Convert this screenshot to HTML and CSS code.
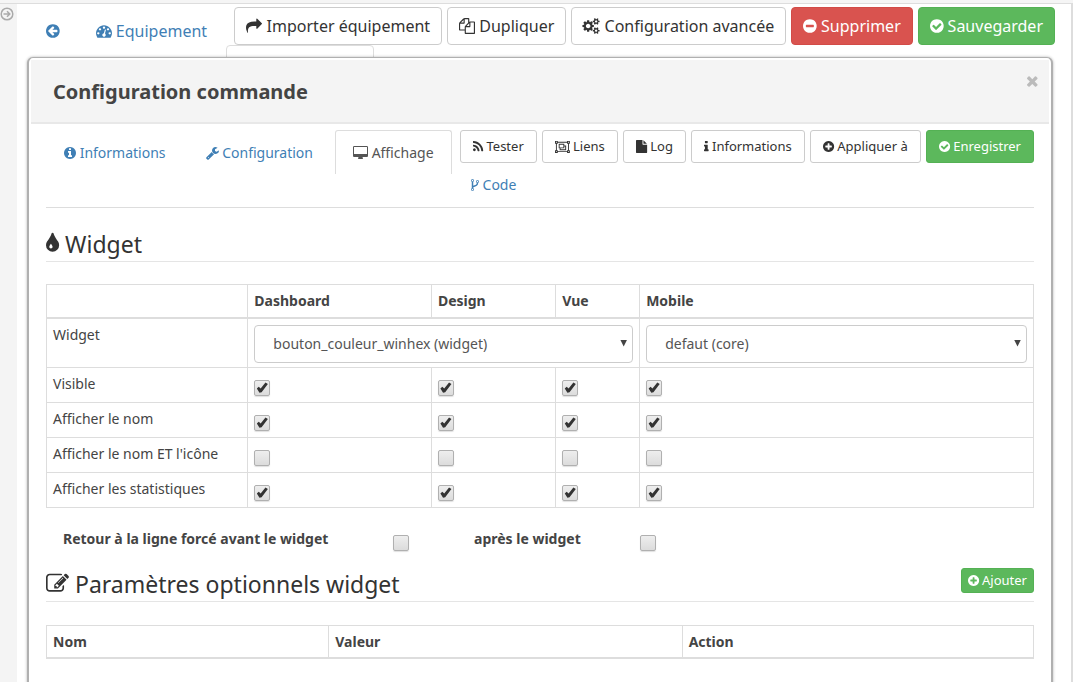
FILE: index.html
```html
<!DOCTYPE html>
<html lang="fr">
<head>
<meta charset="utf-8">
<title>Configuration commande</title>
<link rel="stylesheet" href="styles.css">
</head>
<body>
<svg class="sprite" aria-hidden="true">
  <defs>
    <path id="i-left" d="M1408 960v-128q0-26-19-45t-45-19h-502l189-189q19-19 19-45t-19-45l-91-91q-18-18-45-18t-45 18l-362 362-91 91q-18 18-18 45t18 45l91 91 362 362q18 18 45 18t45-18l91-91q18-18 18-45t-18-45l-189-189h502q26 0 45-19t19-45zm256-64q0 209-103 385.500t-279.500 279.500-385.500 103-385.500-103-279.500-279.500-103-385.500 103-385.500 279.500-279.500 385.500-103 385.500 103 279.500 279.500 103 385.500z"/>
    <path id="i-gauge" d="M384 1152q0-53-37.500-90.500t-90.500-37.500-90.500 37.500-37.500 90.500 37.500 90.500 90.500 37.500 90.500-37.500 37.500-90.500zm192-448q0-53-37.500-90.500t-90.500-37.500-90.500 37.500-37.500 90.500 37.500 90.500 90.500 37.500 90.500-37.500 37.500-90.500zm428 481l101-382q6-26-7.500-48.500t-38.500-29.500-48 6.500-30 39.500l-101 382q-60 5-107 43.500t-63 98.500q-20 77 20 146t117 89 146-20 89-117q16-60-6-117t-72-91zm660-33q0-53-37.500-90.500t-90.500-37.500-90.500 37.500-37.500 90.500 37.500 90.500 90.500 37.500 90.500-37.500 37.500-90.500zm-640-640q0-53-37.500-90.500t-90.500-37.500-90.500 37.500-37.500 90.500 37.500 90.500 90.500 37.500 90.500-37.500 37.500-90.500zm448 192q0-53-37.500-90.500t-90.500-37.500-90.500 37.500-37.500 90.500 37.500 90.500 90.500 37.500 90.500-37.500 37.500-90.500zm320 448q0 261-141 483-19 29-54 29h-1402q-35 0-54-29-141-221-141-483 0-182 71-348t191-286 286-191 348-71 348 71 286 191 191 286 71 348z"/>
    <path id="i-share" d="M1792 640q0 26-19 45l-512 512q-19 19-45 19t-45-19-19-45v-256h-224q-98 0-175.500 6t-154 21.500-133 42.500-105.500 69.500-80 101-48.500 138.500-17.500 181q0 55 5 123 0 6 2.500 23.500t2.500 26.500q0 15-8.500 25t-23.500 10q-16 0-28-17-7-9-13-22t-13.500-30-10.500-24q-127-285-127-451 0-199 53-333 162-403 875-403h224v-256q0-26 19-45t45-19 45 19l512 512q19 19 19 45z"/>
    <path id="i-files" d="M1696 384q40 0 68 28t28 68v1216q0 40-28 68t-68 28h-960q-40 0-68-28t-28-68v-288h-544q-40 0-68-28t-28-68v-672q0-40 20-88t48-76l408-408q28-28 76-48t88-20h416q40 0 68 28t28 68v328q68-40 128-40h416zm-544 213l-299 299h299v-299zm-640-384l-299 299h299v-299zm196 647l316-316v-416h-384v416q0 40-28 68t-68 28h-416v640h512v-256q0-40 20-88t48-76zm956 804v-1152h-384v416q0 40-28 68t-68 28h-416v640h896z"/>
    <path id="i-cogs" fill-rule="evenodd" d="M832 896q0-106-75-181t-181-75-181 75-75 181 75 181 181 75 181-75 75-181zm768 512q0-52-38-90t-90-38-90 38-38 90q0 53 37.500 90.500t90.500 37.500 90.500-37.500 37.500-90.500zm0-1024q0-52-38-90t-90-38-90 38-38 90q0 53 37.500 90.500t90.500 37.500 90.500-37.500 37.500-90.500zm-384 421v185q0 10-7 19.500t-16 10.500l-155 24q-11 35-32 76 34 48 90 115 7 11 7 20 0 12-7 19-23 30-82.500 89.500t-78.500 59.500q-11 0-21-7l-115-90q-37 19-77 31-11 108-23 155-7 24-30 24h-186q-11 0-20-7.500t-10-17.500l-23-153q-34-10-75-31l-118 89q-7 7-20 7-11 0-21-8-144-133-144-160 0-9 7-19 10-14 41-53t47-61q-23-44-35-82l-152-24q-10-1-17-9.500t-7-19.500v-185q0-10 7-19.500t16-10.500l155-24q11-35 32-76-34-48-90-115-7-11-7-20 0-12 7-20 22-30 82-89t79-59q11 0 21 7l115 90q34-18 77-32 11-108 23-154 7-24 30-24h186q11 0 20 7.500t10 17.500l23 153q34 10 75 31l118-89q8-7 20-7 11 0 21 8 144 133 144 160 0 8-7 19-12 16-42 54t-45 60q23 48 34 82l152 23q10 2 17 10.500t7 19.500zm640 533v140q0 16-149 31-12 27-30 52 51 113 51 138 0 4-4 7-122 71-124 71-8 0-46-47t-52-68q-20 2-30 2t-30-2q-14 21-52 68t-46 47q-2 0-124-71-4-3-4-7 0-25 51-138-18-25-30-52-149-15-149-31v-140q0-16 149-31 13-29 30-52-51-113-51-138 0-4 4-7 4-2 35-20t59-34 30-16q8 0 46 46.500t52 67.500q20-2 30-2t30 2q51-71 92-112l6-2q4 0 124 70 4 3 4 7 0 25-51 138 17 23 30 52 149 15 149 31zm0-1024v140q0 16-149 31-12 27-30 52 51 113 51 138 0 4-4 7-122 71-124 71-8 0-46-47t-52-68q-20 2-30 2t-30-2q-14 21-52 68t-46 47q-2 0-124-71-4-3-4-7 0-25 51-138-18-25-30-52-149-15-149-31v-140q0-16 149-31 13-29 30-52-51-113-51-138 0-4 4-7 4-2 35-20t59-34 30-16q8 0 46 46.500t52 67.500q20-2 30-2t30 2q51-71 92-112l6-2q4 0 124 70 4 3 4 7 0 25-51 138 17 23 30 52 149 15 149 31z"/>
    <path id="i-minus" d="M1344 960v-128q0-26-19-45t-45-19h-768q-26 0-45 19t-19 45v128q0 26 19 45t45 19h768q26 0 45-19t19-45zm320-64q0 209-103 385.500t-279.500 279.500-385.500 103-385.500-103-279.500-279.500-103-385.500 103-385.500 279.500-279.500 385.500-103 385.500 103 279.500 279.500 103 385.500z"/>
    <path id="i-check" d="M1412 734q0-28-18-46l-91-90q-19-19-45-19t-45 19l-408 407-226-226q-19-19-45-19t-45 19l-91 90q-18 18-18 46 0 27 18 45l362 362q19 19 45 19 27 0 46-19l543-543q18-18 18-45zm252 162q0 209-103 385.500t-279.500 279.500-385.500 103-385.500-103-279.500-279.500-103-385.500 103-385.500 279.500-279.500 385.500-103 385.500 103 279.500 279.500 103 385.500z"/>
    <path id="i-plus" d="M1344 960v-128q0-26-19-45t-45-19h-256v-256q0-26-19-45t-45-19h-128q-26 0-45 19t-19 45v256h-256q-26 0-45 19t-19 45v128q0 26 19 45t45 19h256v256q0 26 19 45t45 19h128q26 0 45-19t19-45v-256h256q26 0 45-19t19-45zm320-64q0 209-103 385.500t-279.500 279.500-385.500 103-385.500-103-279.500-279.500-103-385.500 103-385.500 279.500-279.500 385.500-103 385.500 103 279.500 279.500 103 385.500z"/>
    <path id="i-infoc" d="M1152 1376v-160q0-14-9-23t-23-9h-96v-512q0-14-9-23t-23-9h-320q-14 0-23 9t-9 23v160q0 14 9 23t23 9h96v320h-96q-14 0-23 9t-9 23v160q0 14 9 23t23 9h448q14 0 23-9t9-23zm-128-896v-160q0-14-9-23t-23-9h-192q-14 0-23 9t-9 23v160q0 14 9 23t23 9h192q14 0 23-9t9-23zm640 416q0 209-103 385.500t-279.500 279.500-385.500 103-385.500-103-279.500-279.500-103-385.500 103-385.500 279.500-279.500 385.500-103 385.500 103 279.500 279.500 103 385.500z"/>
    <path id="i-wrench" d="M448 1472q0-26-19-45t-45-19-45 19-19 45 19 45 45 19 45-19 19-45zm644-420l-682 682q-37 37-90 37-52 0-91-37l-106-108q-38-36-38-90 0-53 38-91l681-681q39 98 114.500 173.500t173.500 114.500zm634-435q0 39-23 106-47 134-164.500 217.500t-258.500 83.500q-185 0-316.500-131.500t-131.500-316.500 131.500-316.500 316.500-131.500q58 0 121.500 16.500t107.500 46.500q16 11 16 28t-16 28l-293 169v224l193 107q5-3 79-48.500t135.500-81 70.500-35.500q15 0 23.500 10t8.500 25z"/>
    <path id="i-desktop" d="M1792 992v-832q0-13-9.500-22.500t-22.500-9.500h-1600q-13 0-22.500 9.500t-9.500 22.500v832q0 13 9.500 22.500t22.500 9.500h1600q13 0 22.500-9.500t9.500-22.500zm128-832v1088q0 66-47 113t-113 47h-544q0 37 16 77.500t32 71 16 43.500q0 26-19 45t-45 19h-512q-26 0-45-19t-19-45q0-14 16-44t32-70 16-78h-544q-66 0-113-47t-47-113v-1088q0-66 47-113t113-47h1600q66 0 113 47t47 113z"/>
    <path id="i-rss" d="M576 1344q0 80-56 136t-136 56-136-56-56-136 56-136 136-56 136 56 56 136zm512 123q2 28-17 48-18 21-47 21h-135q-25 0-43-16.500t-20-41.500q-22-229-184.500-391.500t-391.500-184.500q-25-2-41.500-20t-16.500-43v-135q0-29 21-47 17-17 43-17h5q160 13 306 80.500t259 181.500q114 113 181.500 259t80.500 306zm512 2q2 27-18 47-18 20-46 20h-143q-26 0-44.500-17.500t-19.500-42.500q-12-215-101-408.500t-231.500-336-336-231.500-408.500-102q-25-1-42.500-19.500t-17.500-43.500v-143q0-28 20-46 18-18 44-18h3q262 13 501.500 120t425.500 294q187 186 294 425.500t120 501.500z"/>
    <path id="i-group" fill-rule="evenodd" d="M0 128h384v128h1280v-128h384v384h-128v896h128v384h-384v-128h-1280v128h-384v-384h128v-896h-128zM128 256v128h128v-128zM1792 256v128h128v-128zM128 1536v128h128v-128zM1792 1536v128h128v-128zM384 384v128h-128v896h128v128h1280v-128h128v-896h-128v-128zM512 512h768v256h256v640h-896v-256h-128zM640 640v384h512v-384zM1280 896v256h-512v128h640v-384z"/>
    <path id="i-file" d="M1152 512v-472q22 14 36 28l408 408q14 14 28 36h-472zm-128 32q0 40 28 68t68 28h544v1056q0 40-28 68t-68 28h-1344q-40 0-68-28t-28-68v-1600q0-40 28-68t68-28h800v544z"/>
    <path id="i-info" d="M1216 1344v128q0 26-19 45t-45 19h-512q-26 0-45-19t-19-45v-128q0-26 19-45t45-19h64v-384h-64q-26 0-45-19t-19-45v-128q0-26 19-45t45-19h384q26 0 45 19t19 45v576h64q26 0 45 19t19 45zm-128-1152v192q0 26-19 45t-45 19h-256q-26 0-45-19t-19-45v-192q0-26 19-45t45-19h256q26 0 45 19t19 45z"/>
    <path id="i-fork" d="M672 1472q0-40-28-68t-68-28-68 28-28 68 28 68 68 28 68-28 28-68zm0-1152q0-40-28-68t-68-28-68 28-28 68 28 68 68 28 68-28 28-68zm640 128q0-40-28-68t-68-28-68 28-28 68 28 68 68 28 68-28 28-68zm96 0q0 52-26 96.500t-70 69.500q-2 287-226 414-67 38-203 81-128 40-169.500 71t-41.500 100v26q44 25 70 69.500t26 96.500q0 80-56 136t-136 56-136-56-56-136q0-52 26-96.500t70-69.500v-820q-44-25-70-69.500t-26-96.500q0-80 56-136t136-56 136 56 56 136q0 52-26 96.500t-70 69.500v497q54-26 154-57 55-17 87.500-29.500t70.500-31 59-39.500 40.500-51 28-69.500 8.500-91.500q-44-25-70-69.500t-26-96.500q0-80 56-136t136-56 136 56 56 136z"/>
    <path id="i-tint" d="M896 1152q0-36-20-69-1-1-15.500-22.500t-25.500-38-25-44-21-50.500q-4-16-21-16t-21 16q-7 23-21 50.500t-25 44-25.500 38-15.500 22.500q-20 33-20 69 0 53 37.500 90.500t90.500 37.500 90.500-37.500 37.500-90.500zm512-128q0 212-150 362t-362 150-362-150-150-362q0-145 81-275 6-9 62.500-90.500t101-151 99.500-178 83-201.500q9-30 34-47t51-17 51.500 17 33.500 47q28 93 83 201.500t99.500 178 101 151 62.500 90.500q81 127 81 275z"/>
    <path id="i-edit" d="M888 1184l116-116-152-152-116 116v56h96v96h56zm440-720q-16-16-33 1l-350 350q-17 17-1 33t33-1l350-350q17-17 1-33zm80 594v190q0 119-84.500 203.500t-203.500 84.500h-832q-119 0-203.500-84.500t-84.500-203.500v-832q0-119 84.500-203.500t203.500-84.500h832q63 0 117 25 15 7 18 23 3 17-9 29l-49 49q-14 14-32 8-23-6-45-6h-832q-66 0-113 47t-47 113v832q0 66 47 113t113 47h832q66 0 113-47t47-113v-126q0-13 9-22l64-64q15-15 35-7t20 29zm-96-738l288 288-672 672h-288v-288zm444 132l-92 92-288-288 92-92q28-28 68-28t68 28l152 152q28 28 28 68t-28 68z"/>
    <path id="i-times" d="M1490 1322q0 40-28 68l-136 136q-28 28-68 28t-68-28l-294-294-294 294q-28 28-68 28t-68-28l-136-136q-28-28-28-68t28-68l294-294-294-294q-28-28-28-68t28-68l136-136q28-28 68-28t68 28l294 294 294-294q28-28 68-28t68 28l136 136q28 28 28 68t-28 68l-294 294 294 294q28 28 28 68z"/>
  </defs>
</svg>

<div class="page">
  <aside class="rail">
    <button class="rail-toggle" aria-label="Ouvrir le menu">
      <svg class="rail-icon" viewBox="0 0 14 14"><circle cx="7" cy="7" r="5.800"/><path d="M3.500 7h6M7 4.200L9.800 7 7 9.800"/></svg>
    </button>
  </aside>
  <main class="main">
    <nav class="crumbs">
      <a href="#" class="link" aria-label="Retour"><svg class="icon" viewBox="128 0 1536 1792"><use href="#i-left"/></svg></a>
      <a href="#" class="link"><svg class="icon" viewBox="0 0 1792 1792"><use href="#i-gauge"/></svg> Equipement</a>
    </nav>
    <div class="toolbar">
      <button class="btn btn-lg"><svg class="icon" viewBox="0 0 1792 1792"><use href="#i-share"/></svg> Importer équipement</button>
      <button class="btn btn-lg"><svg class="icon" viewBox="0 0 1792 1792"><use href="#i-files"/></svg> Dupliquer</button>
      <button class="btn btn-lg"><svg class="icon" viewBox="0 0 1920 1792"><use href="#i-cogs"/></svg> Configuration avancée</button>
      <button class="btn btn-lg btn-danger"><svg class="icon" viewBox="128 0 1536 1792"><use href="#i-minus"/></svg> Supprimer</button>
      <button class="btn btn-lg btn-success"><svg class="icon" viewBox="128 0 1536 1792"><use href="#i-check"/></svg> Sauvegarder</button>
    </div>
    <div class="back-tab"></div>
  </main>
</div>

<section class="modal" role="dialog" aria-labelledby="modal-title">
  <header class="modal-head">
    <h1 id="modal-title" class="modal-title">Configuration commande</h1>
    <button class="close" aria-label="Fermer"><svg class="icon" viewBox="302 0 1188 1792"><use href="#i-times"/></svg></button>
  </header>
  <div class="modal-body">
    <div class="tabbar">
      <nav class="tabs">
        <a href="#" class="tab"><svg class="icon" viewBox="128 0 1536 1792"><use href="#i-infoc"/></svg> Informations</a>
        <a href="#" class="tab"><svg class="icon" viewBox="64 0 1664 1792"><use href="#i-wrench"/></svg> Configuration</a>
        <a href="#" class="tab tab-active"><svg class="icon" viewBox="0 0 1920 1792"><use href="#i-desktop"/></svg> Affichage</a>
      </nav>
      <div class="actions">
        <div class="action-row">
          <button class="btn"><svg class="icon" viewBox="192 0 1408 1792"><use href="#i-rss"/></svg> Tester</button>
          <button class="btn"><svg class="icon" viewBox="0 0 2048 1792"><use href="#i-group"/></svg> Liens</button>
          <button class="btn"><svg class="icon" viewBox="128 0 1536 1792"><use href="#i-file"/></svg> Log</button>
          <button class="btn"><svg class="icon" viewBox="576 0 640 1792"><use href="#i-info"/></svg> Informations</button>
          <button class="btn"><svg class="icon" viewBox="128 0 1536 1792"><use href="#i-plus"/></svg> Appliquer à</button>
          <button class="btn btn-success"><svg class="icon" viewBox="128 0 1536 1792"><use href="#i-check"/></svg> Enregistrer</button>
        </div>
        <a href="#" class="code-link"><svg class="icon" viewBox="384 0 1024 1792"><use href="#i-fork"/></svg> Code</a>
      </div>
    </div>

    <div class="section-head">
      <h2 class="section-title"><svg class="icon" viewBox="384 0 1024 1792"><use href="#i-tint"/></svg> Widget</h2>
    </div>
    <table class="table widgets">
      <colgroup><col class="c-name"><col class="c-dash"><col class="c-design"><col class="c-vue"><col></colgroup>
      <thead>
        <tr><th></th><th>Dashboard</th><th>Design</th><th>Vue</th><th>Mobile</th></tr>
      </thead>
      <tbody>
        <tr class="row-select">
          <td>Widget</td>
          <td colspan="3"><div class="picker"><select class="select" aria-label="Widget dashboard"><option>bouton_couleur_winhex (widget)</option></select></div></td>
          <td><div class="picker"><select class="select" aria-label="Widget mobile"><option>defaut (core)</option></select></div></td>
        </tr>
        <tr>
          <td>Visible</td>
          <td><input type="checkbox" class="check" aria-label="Visible, dashboard" checked></td>
          <td><input type="checkbox" class="check" aria-label="Visible, design" checked></td>
          <td><input type="checkbox" class="check" aria-label="Visible, vue" checked></td>
          <td><input type="checkbox" class="check" aria-label="Visible, mobile" checked></td>
        </tr>
        <tr>
          <td>Afficher le nom</td>
          <td><input type="checkbox" class="check" aria-label="Nom, dashboard" checked></td>
          <td><input type="checkbox" class="check" aria-label="Nom, design" checked></td>
          <td><input type="checkbox" class="check" aria-label="Nom, vue" checked></td>
          <td><input type="checkbox" class="check" aria-label="Nom, mobile" checked></td>
        </tr>
        <tr>
          <td>Afficher le nom ET l'icône</td>
          <td><input type="checkbox" class="check" aria-label="Nom et icône, dashboard"></td>
          <td><input type="checkbox" class="check" aria-label="Nom et icône, design"></td>
          <td><input type="checkbox" class="check" aria-label="Nom et icône, vue"></td>
          <td><input type="checkbox" class="check" aria-label="Nom et icône, mobile"></td>
        </tr>
        <tr>
          <td>Afficher les statistiques</td>
          <td><input type="checkbox" class="check" aria-label="Statistiques, dashboard" checked></td>
          <td><input type="checkbox" class="check" aria-label="Statistiques, design" checked></td>
          <td><input type="checkbox" class="check" aria-label="Statistiques, vue" checked></td>
          <td><input type="checkbox" class="check" aria-label="Statistiques, mobile" checked></td>
        </tr>
      </tbody>
    </table>

    <div class="breaks">
      <label for="br-before">Retour à la ligne forcé avant le widget</label>
      <input type="checkbox" class="check" id="br-before">
      <label for="br-after">après le widget</label>
      <input type="checkbox" class="check" id="br-after">
    </div>

    <div class="section-head section-head-params">
      <h2 class="section-title"><svg class="icon" viewBox="0 0 1792 1792"><use href="#i-edit"/></svg> Paramètres optionnels widget</h2>
      <button class="btn btn-sm btn-success"><svg class="icon" viewBox="128 0 1536 1792"><use href="#i-plus"/></svg> Ajouter</button>
    </div>
    <table class="table params">
      <colgroup><col class="c-nom"><col class="c-valeur"><col></colgroup>
      <thead><tr><th>Nom</th><th>Valeur</th><th>Action</th></tr></thead>
    </table>
  </div>
</section>
</body>
</html>
```

FILE: styles.css
```css
* { box-sizing: border-box; }

html, body { height: 100%; }

body {
  margin: 0;
  overflow: hidden;
  position: relative;
  background: #fff;
  color: #444;
  font: 14px/20px "Noto Sans", sans-serif;
}

a { color: #3f7fb5; text-decoration: none; }
button { font: inherit; cursor: pointer; }

.sprite { position: absolute; width: 0; height: 0; }

.icon {
  height: 1em;
  width: auto;
  fill: currentColor;
  vertical-align: -2px;
  overflow: visible;
}

/* Page behind the dialog */
.page {
  min-height: 100%;
  display: grid;
  grid-template-columns: 17px 1fr;
  border-top: 3px solid #f5f5f5;
}

.rail { background: #f4f4f4; border-top: 1px solid #ddd; }

.rail-toggle {
  display: block;
  margin: 3px 0 0;
  padding: 0;
  border: 0;
  background: none;
}

.rail-icon {
  display: block;
  width: 14px;
  height: 14px;
  fill: none;
  stroke: #aaa;
  stroke-width: 1.500;
}

.main {
  display: grid;
  grid-template-columns: 1fr auto;
  grid-template-rows: auto 1fr;
  border-top: 1px solid #ddd;
  border-right: 2px solid #ddd;
}

.crumbs {
  display: flex;
  gap: 36px;
  padding: 15px 0 0 29px;
  font-size: 16px;
  line-height: 24px;
  white-space: nowrap;
}

.toolbar { display: flex; gap: 5px; padding: 3px 16px 0 0; }

.back-tab {
  grid-column: 1 / -1;
  width: 148px;
  height: 20px;
  margin: 0 0 0 209px;
  border: 1px solid #ddd;
  border-radius: 4px 4px 0 0;
}

.btn {
  padding: 6px 12px;
  border: 1px solid #ccc;
  border-radius: 3px;
  background: #fff;
  color: #333;
  font-size: 13px;
  line-height: 19px;
  white-space: nowrap;
}

.btn-lg { padding: 6px 11px; border-radius: 4px; font-size: 16px; line-height: 24px; }
.btn-sm { padding: 2px 6px; }
.btn-success { background: #5cb85c; border-color: #54b154; color: #fff; }
.btn-danger { background: #d9534f; border-color: #d24b47; color: #fff; }

/* Dialog */
.modal {
  position: absolute;
  top: 57px;
  right: 20px;
  bottom: -10px;
  left: 27px;
  padding: 2px;
  border: 2px solid #b0b0b0;
  border-top-width: 1px;
  border-radius: 6px;
  background: #fff;
  box-shadow: 0 0 3px rgba(0, 0, 0, 0.300);
}

.modal-head {
  display: flex;
  justify-content: space-between;
  align-items: flex-start;
  height: 64px;
  padding: 17px 11px 0 22px;
  border-bottom: 2px solid #e8e8e8;
  background: #f4f4f4;
}

.modal-title { margin: 0; font-size: 20px; line-height: 30px; font-weight: 700; }

.close {
  display: flex;
  align-items: flex-start;
  padding: 0;
  border: 0;
  background: none;
  color: #bbb;
  font-size: 16px;
  line-height: 16px;
  margin-top: -4px;
}

.modal-body { padding: 6px 15px 0; }

.tabbar {
  display: flex;
  justify-content: space-between;
  height: 78px;
  border-bottom: 1px solid #ddd;
}

.tabs { display: flex; gap: 4px; }

.tab { height: 44px; padding: 12px 17px; border: 1px solid transparent; white-space: nowrap; }

.tab-active {
  border-color: #ddd;
  border-bottom: 0;
  border-radius: 3px 3px 0 0;
  color: #555;
}

.action-row { display: flex; gap: 5px; }
.code-link { display: block; padding: 12px 11px 0; }

.section-head {
  display: flex;
  justify-content: space-between;
  align-items: flex-start;
  height: 36px;
  margin: 18px 0 22px;
  border-bottom: 1px solid #e5e5e5;
}

.section-title { margin: 0; color: #333; font-size: 23px; line-height: 36px; font-weight: 400; }

.table {
  width: 100%;
  table-layout: fixed;
  border-collapse: collapse;
}

.table th, .table td {
  height: 35px;
  padding: 6px 6px 4px;
  border: 1px solid #ddd;
  text-align: left;
  vertical-align: top;
}

.table th { height: 33px; border-bottom-width: 2px; }
.row-select td { height: 49px; }

.c-name { width: 20.400%; }
.c-dash { width: 18.600%; }
.c-design { width: 12.600%; }
.c-vue { width: 8.500%; }
.c-nom { width: 28.600%; }
.c-valeur { width: 35.800%; }

.picker { position: relative; }

.picker::after {
  content: "";
  position: absolute;
  top: 15px;
  right: 6px;
  width: 7px;
  height: 7px;
  background: #444;
  clip-path: polygon(0 0, 100% 0, 50% 100%);
  pointer-events: none;
}

.select {
  display: block;
  width: 100%;
  height: 38px;
  padding: 0 18px;
  appearance: none;
  border: 1px solid #ccc;
  border-radius: 4px;
  background: #fff;
  color: #555;
  font: inherit;
}

.check {
  appearance: none;
  display: block;
  width: 16px;
  height: 16px;
  margin: 6px 0 0;
  border: 1px solid #b0b0b0;
  border-radius: 2px;
  background: linear-gradient(#eee, #dcdcdc);
  box-shadow: 0 1px 1px #e0e0e0;
}

.check:checked::after {
  content: "";
  display: block;
  width: 12px;
  height: 12px;
  margin: 1px;
  background: #333;
  clip-path: polygon(4% 58%, 20% 44%, 36% 58%, 76% 8%, 96% 20%, 44% 90%, 26% 94%);
}

.breaks {
  display: grid;
  grid-template-columns: 330px 81px 166px 1fr;
  padding: 21px 0 0 17px;
  font-weight: 700;
}

.section-head-params { margin: 15px 0 23px; }

.section-head-params .btn { margin-top: 2px; }
```
